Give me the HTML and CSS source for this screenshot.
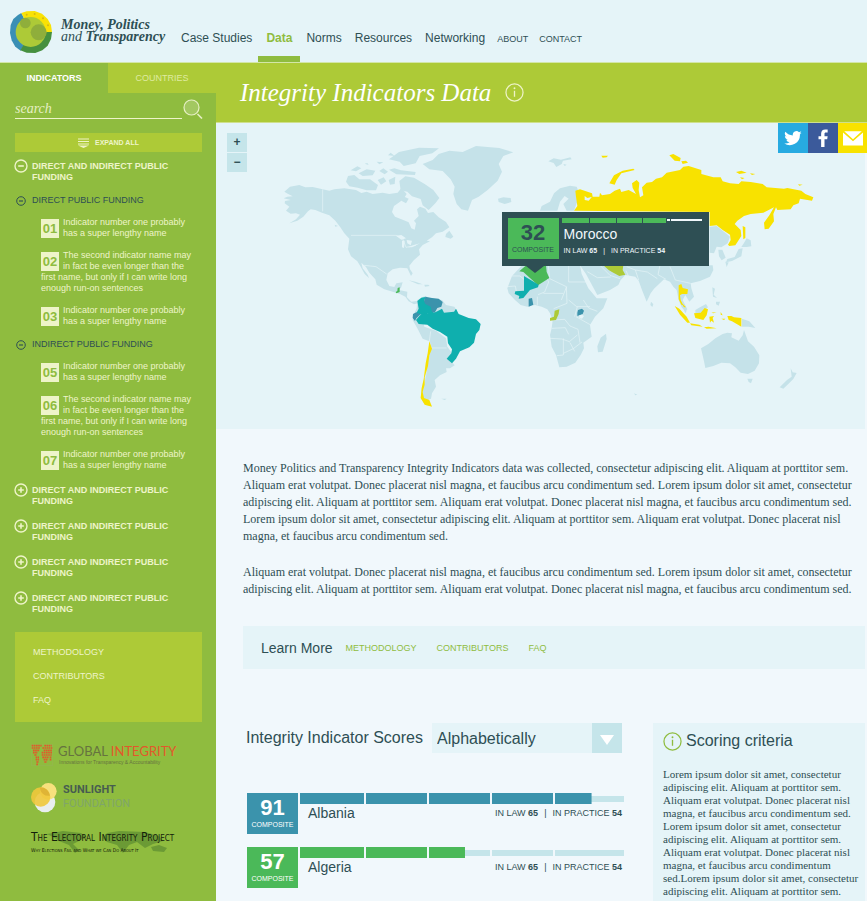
FILE: index.html
```html
<!DOCTYPE html>
<html lang="en">
<head>
<meta charset="utf-8">
<title>Money, Politics and Transparency</title>
<link rel="stylesheet" href="styles.css">
</head>
<body>
<svg width="0" height="0" class="defs" aria-hidden="true">
  <symbol id="minus" viewBox="0 0 14 14"><circle cx="7" cy="7" r="6" fill="none" stroke="currentColor" stroke-width="1.4"/><path d="M4.2 7h5.6" stroke="currentColor" stroke-width="1.6"/></symbol>
  <symbol id="plus" viewBox="0 0 14 14"><circle cx="7" cy="7" r="6" fill="none" stroke="currentColor" stroke-width="1.4"/><path d="M4.2 7h5.6M7 4.2v5.6" stroke="currentColor" stroke-width="1.6"/></symbol>
  <symbol id="info" viewBox="0 0 20 20"><circle cx="10" cy="10" r="9" fill="none" stroke="currentColor" stroke-width="1.3"/><path d="M10 8.2v6.3" stroke="currentColor" stroke-width="1.4"/><circle cx="10" cy="5.6" r="1" fill="currentColor"/></symbol>
</svg>
<header class="site-header">
  <a class="brand" href="#">
    <svg class="brand-mark" viewBox="0 0 126 126" aria-hidden="true">
      <path d="M63 63 34 6 24 12 10 24 2 42 0 66 5 88 16 107 32 119z" fill="#3a8fb5"/>
      <path d="M63 63 34 6 50 1 74 0 96 8 113 24 123 42 126 64z" fill="#f9e206"/>
      <path d="M63 63 126 63 123 84 113 104 97 118 76 126 50 125 31 118z" fill="#46903f"/>
      <circle cx="62" cy="63" r="45" fill="#adca37"/>
      <circle cx="46" cy="36" r="16" fill="#8fae3b"/><circle cx="86" cy="64" r="24" fill="#8fae3b"/>
      <g fill="#d9b912"><circle cx="50" cy="11" r="3"/><circle cx="74" cy="9" r="3"/><circle cx="99" cy="22" r="3"/><circle cx="114" cy="43" r="3"/></g>
    </svg>
    <span class="brand-name"><b>Money, Politics</b><span>and <b>Transparency</b></span></span>
  </a>
  <nav class="main-nav" aria-label="Main">
    <a href="#">Case Studies</a><a href="#" class="current">Data</a><a href="#">Norms</a><a href="#">Resources</a><a href="#">Networking</a><a href="#" class="minor">ABOUT</a><a href="#" class="minor">CONTACT</a>
  </nav>
</header>
<div class="shell">
<aside class="sidebar">
  <div class="tabs"><button type="button" class="tab active">INDICATORS</button><button type="button" class="tab">COUNTRIES</button></div>
  <form class="search">
    <input type="search" placeholder="search" aria-label="Search indicators">
    <button type="button" aria-label="Search"><svg viewBox="0 0 20 20"><circle cx="8.500" cy="8.500" r="7.500" fill="#a3c861" stroke="#e6efc4" stroke-width="1.2"/><path d="M14.500 15l4.500 4.500" stroke="#e6efc4" stroke-width="1.600"/></svg></button>
  </form>
  <button type="button" class="expand"><svg viewBox="0 0 11 10" aria-hidden="true"><path d="M0 1h11M0 3.500h11M0 6h11" stroke="#eef3c8"/><path d="M0 7.500h11L5.500 10z" fill="#eef3c8"/></svg>EXPAND ALL</button>
  <div class="tree">
    <button type="button" class="cat"><svg><use href="#minus"/></svg><span>DIRECT AND INDIRECT PUBLIC FUNDING</span></button>
    <button type="button" class="sub"><svg><use href="#minus"/></svg><span>DIRECT PUBLIC FUNDING</span></button>
    <ul class="indicators">
      <li><b>01</b>Indicator number one probably has a super lengthy name</li>
      <li><b>02</b>The second indicator name may in fact be even longer than the first name, but only if I can write long enough run-on sentences</li>
      <li><b>03</b>Indicator number one probably has a super lengthy name</li>
    </ul>
    <button type="button" class="sub"><svg><use href="#minus"/></svg><span>INDIRECT PUBLIC FUNDING</span></button>
    <ul class="indicators">
      <li><b>05</b>Indicator number one probably has a super lengthy name</li>
      <li><b>06</b>The second indicator name may in fact be even longer than the first name, but only if I can write long enough run-on sentences</li>
      <li><b>07</b>Indicator number one probably has a super lengthy name</li>
    </ul>
    <button type="button" class="cat"><svg><use href="#plus"/></svg><span>DIRECT AND INDIRECT PUBLIC FUNDING</span></button>
    <button type="button" class="cat"><svg><use href="#plus"/></svg><span>DIRECT AND INDIRECT PUBLIC FUNDING</span></button>
    <button type="button" class="cat"><svg><use href="#plus"/></svg><span>DIRECT AND INDIRECT PUBLIC FUNDING</span></button>
    <button type="button" class="cat"><svg><use href="#plus"/></svg><span>DIRECT AND INDIRECT PUBLIC FUNDING</span></button>
  </div>
  <nav class="side-links" aria-label="More"><a href="#">METHODOLOGY</a><a href="#">CONTRIBUTORS</a><a href="#">FAQ</a></nav>
  <div class="partners">
    <a class="gi" href="#">
      <svg viewBox="0 0 66 66" aria-hidden="true"><path d="M1 1h64v64H1z" fill="none" stroke="#9fae6a"/><g stroke="#e2582b" stroke-width="5" stroke-dasharray="5 1.500" fill="none"><path d="M2 5h30M40 5h22M2 12h26M34 12h30M6 19h20M38 19h26M6 26h14M32 26h32M10 33h8M32 33h30M14 40h10M34 40h20M56 40h6M14 47h10M38 47h12M56 47h6M16 54h8M40 54h8M16 61h5"/></g></svg>
      <span class="gi-text"><span class="gi-name">GLOBAL <em>INTEGRITY</em></span><small>Innovations for Transparency &amp; Accountability</small></span>
    </a>
    <a class="sun" href="#">
      <svg viewBox="0 0 78 90" aria-hidden="true"><circle cx="42" cy="57" r="31" fill="#e9eef0"/><circle cx="52" cy="25" r="25" fill="#f7e17d"/><circle cx="29" cy="42" r="29" fill="#f0c83c" opacity=".9"/><path d="M27 13a29 29 0 0 1 30 25A25 25 0 0 1 27 13z" fill="#dfb436"/></svg>
      <span class="sun-text"><b>SUNLIGHT</b><span>FOUNDATION</span></span>
    </a>
    <a class="eip" href="#">
      <svg viewBox="0 0 126 24" aria-hidden="true" fill="#6b9a35"><path d="M2 4 18 1 36 3 42 7 34 11 28 14 34 20 30 23 24 15 14 11 8 7zM62 3l12-2 26 1 14 4 4 5-10 3-8 4-8-6-8 3-6 8-6-8-10-3-4-4zM106 17l8-2 8 3-3 4-11-1z"/></svg>
      <span class="eip-name">The Electoral Integrity Project</span>
      <small>Why Elections Fail and What we Can Do About It</small>
    </a>
  </div>
</aside>
<main>
  <div class="banner"><h1>Integrity Indicators Data</h1><svg aria-hidden="true"><use href="#info"/></svg></div>
  <section class="map" aria-label="World map">
    <svg class="world" viewBox="0 0 1947 918" aria-hidden="true">
      <g transform="translate(0 -9)">
        <g class="land">
          <path d="M205 215 222 200 250 195 268 202 290 201 320 208 340 212 355 208 385 205 420 210 436 219 452 215 470 222 500 218 520 222 545 218 556 204 572 222 562 238 548 248 534 258 528 276 537 290 560 299 578 307 586 325 596 329 600 310 594 302 608 288 603 268 612 260 628 266 636 279 652 276 668 292 690 306 700 322 680 335 660 340 648 352 632 362 642 364 620 375 609 388 612 404 594 420 580 437 582 448 590 460 585 468 574 445 552 443 530 448 515 460 511 480 520 498 535 501 541 490 560 487 555 503 546 510 560 512 574 515 573 532 586 545 602 543 606 550 594 553 578 544 568 530 552 522 530 515 505 508 482 494 478 478 460 458 450 441 436 428 440 445 455 464 459 474 446 462 434 440 424 424 405 409 396 388 400 356 385 340 373 322 358 302 340 286 318 278 298 270 284 268 276 274 262 290 244 302 220 310 240 298 252 284 240 280 224 281 210 272 220 260 206 250 207 243 224 240 203 235 214 230 230 229 215 221z"/>
          <path d="M390 185 396 168 415 165 430 178 462 178 486 195 480 211 452 211 425 203 400 199zM404 151l20-12 12 6-16 9zM428 160l24-12 26 4-8 14-30 2zM482 125l20 2-12 6zM490 153l12-8 14 10-10 8zM485 180l18-8 8 12-16 10zM518 180l20-10-2 22-14 2zM519 118l30-22 60-13 60 2-20 15-38 8-12 22-36 8-12-13zM519 149l16-4 20 6 44 5-2 9-56-2zM550 183l18-14 26 4 32 19 26 18 18 24-12 16-20 20-18-14-6-19-26-8-14-14-20-4zM560 228l18 8-8 14-14-8zM536 108l-20-2 8-8zM690 342l10-10 12 18-8 6-16-5zM446 131l8-2 4 6zM366 318l-10-4 2 6z"/>
          <path d="M620 132 650 120 668 102 700 92 740 96 780 78 850 84 892 97 862 108 848 132 858 155 845 182 815 210 788 230 768 240 756 272 736 268 722 252 712 222 716 200 704 178 680 153 640 148z"/>
          <path d="M846 236l16-4 22 2 2 12-20 6-18-6zM578 481l20 4 22 8-14 0zM625 494l12 0 4 4-14 2zM676 836l16 0-6 4z"/>
          <path d="M604 540 618 532 628 528 640 535 678 540 690 555 715 560 721 570 708 580 640 600 620 600 625 620 660 632 690 655 694 680 710 702 700 718 716 736 702 745 690 745 692 756 672 766 656 780 660 800 648 820 645 836 630 842 648 858 628 855 614 835 618 800 628 760 636 720 640 664 620 656 604 625 590 600 594 582 602 565z"/>
        </g>
        <path d="M320 208V274M405 346H540L560 356 570 382 600 376M445 436 480 440 512 462M644 634 640 664 646 684 692 684M636 700 630 760 620 810" class="border"/>
        <path d="M540 347l16-2 14 10-14 4zM558 362l8 0-2 22-6-2zM572 360l16 2-4 14-10-6zM576 382l20-8 16-4-24 12z" fill="#e5f4f8"/>
        <path class="green" d="M545 504l6-2 0 14-10 4-2-4 5-3z"/>
        <path class="teal" d="M604 543l12-10 12-2-3 12 20 8 6 24 4 6-20-2-2 13-18-8-14-4 7-14z"/>
        <path class="blue" d="M628 530l20 4 20 2 12 10-4 14-12 4-8 14-8-2-4-16-16-8-4-8zM591 582l10-5 12 6-12 12-4 8-7-9z"/>
        <path class="teal" d="M640 578l14 0 10-4 14-8 6 12 30-3 6-9 8 16 30 12 22 4 14 14-4 18-10 12-6 26-14 14-28 12-12 22-12 14-16-14 14-16 2-12-12-18-2-20-22-14-22-10-16-12-26-2-8-12 12-14z"/>
        <path class="yellow" d="M640 664l8 22-8 20-4 32-10 34 0 22-6 22 4 18 16 6 8 20-22-6-12-20 3-30 6-26 6-48 6-30z"/>
        <g transform="translate(852 0)">
          <g class="land">
            <path d="M145 124l16-9 22 4 28-7 4 6-26 4-4 10-16 9-8-12zM190 132l10 2-6 4zM120 272 125 258 150 245 162 220 180 205 210 197 230 200 240 225 230 250 222 272 200 272 190 252 206 236 194 228 180 245 172 272z"/>
            <path d="M66 436 36 468 22 505 26 520 45 540 62 555 82 560 105 555 125 560 142 568 150 580 158 600 155 625 150 645 155 680 168 705 178 742 200 740 226 728 242 705 252 685 250 668 275 650 270 615 285 590 310 565 322 535 290 535 265 505 245 462 240 436z"/>
            <path d="M240 436 258 462 292 525 330 510 355 495 362 480 376 465 406 470 416 482 426 510 440 545 452 520 462 506 492 478 510 485 520 500 530 510 536 540 545 562 556 574 562 568 548 540 556 525 568 545 582 530 574 505 572 490 600 483 630 470 640 450 638 436z"/>
            <path d="M629 320 650 318 668 332 690 350 683 370 664 382 650 380 642 400 629 398zM655 389l12 0 10 24-12 8-8-12zM740 355l12 6 2 18-14 2-16 0 8-12zM728 385l-4 24-28 14-18 4 4-10 22-6 12-24zM676 425l10 2-6 14zM453 545l7 8-3 8-6-6zM637 502l8 4-4 18 10 10-12-4zM648 545l12 0-4 12-8-4zM586 570l14-8 18-10 6 10-20 16-18 4zM726 596l22 8 18 20-20-4-20 0zM548 560l12 12-4 8z"/>
            <path d="M603 685 625 672 646 655 668 642 682 638 696 640 694 652 716 662 728 646 732 630 744 664 762 680 778 706 777 730 764 752 744 762 722 758 706 742 690 730 664 728 640 738 616 744 612 724zM742 776l16 0-5 14-7-4zM872 745l6 12 12 2-10 18-12 12-18 17-11-4 22-22 14-10zM318 641l2 16-12 38-14 2-2-18 10-26zM402 820l10 4-6 2z"/>
          </g>
          <path class="border" d="M36 468h24l12 10M22 500l24-2 4 22M138 470l8 16-12 30-20 8M145 436l4 40 50 24 2 50-40 16M206 436v50h56M200 500l-16 40M206 540l24 20 40 0M130 520h60M112 530v26M158 600l36-2 16 20 24 10 6 40M150 655l36 2 22 8 24-20M156 625l40-2 10 20M190 655v50l-20 2M190 700l30-14 26-20M210 668l14 26M228 590l46 26M250 540l16 24 26 10M232 560l-8 30M300 436l30 30 30 10M262 455l30 18 40-2M380 440l26 10 10 30M406 450l36 6 30 20M480 436l-6 28 24 14M510 440l16 40 46 10M378 452l8 18"/>
          <path class="yellow" d="M222 272 232 258 228 230 226 212 240 208 276 220 278 230 262 234 254 228 254 240 266 242 276 230 298 230 300 218 306 226 330 222 344 212 360 206 364 216 386 210 408 222 398 204 396 190 410 180 418 188 416 210 420 232 430 226 426 202 440 188 456 186 468 176 486 172 500 158 540 150 550 140 566 138 604 150 604 162 640 172 662 172 668 184 690 190 716 192 724 184 752 186 788 192 800 202 852 206 862 204 904 212 916 222 940 232 936 242 900 236 896 250 880 256 872 268 832 270 828 262 820 282 822 304 806 326 794 328 792 308 808 286 822 262 790 278 752 282 732 288 712 302 704 312 722 330 724 348 706 376 688 378 684 374 692 360 690 344 668 330 650 316 629 318 629 276z"/>
          <path class="yellow" d="M328 190l14-24 26-14 32-6 4 4-40 10-14 20-6 14zM304 107l20 0-4 5-12 1zM508 106l12-4 22 12-2 10-16-2zM544 124l14-2 6 6-16 4zM708 156l16-4 16 6-22 4zM750 160l16 2-10 3zM720 172l14 2-8 4zM894 193l14 1-10 3zM728 318l8 4 0 32-6 4z"/>
          <path class="yellow" d="M536 496l8-4 4 12 16 4-2 14-16 0-6 4 2 14 8 16-6-2-8-16zM538 542l8 8 12 12-6 0zM524 558l14 8 22 24 10 18-8 0-22-24zM570 610l28 4 10 6-34-4zM582 580l20-2 12-14 10 4-4 18-10 14-24-6zM628 590l14-2-4 6 4 14-8-6-4 6zM634 578l16-2-10 4zM612 622l14-2 24 5-30 1zM662 576l6 10-6-2zM682 588l12 0 8 4 22 2 0 26-10-6-18-10-10-4zM664 596l12 0-4 4z"/>
          <path class="lime" d="M310 436h60l-2 14 8 14-18 4-22-12-10-6zM164 572l14-4-2 14-8 18-18 2 0-8 12-4z"/>
          <path class="green" d="M76 438l62-2 2 20 8 18-34 22-44-40-12-2z"/>
          <path class="teal" d="M72 468l44 26-2 8-24 8-20 24-14 2 2-8-14-6 2-8 26-2z"/>
          <path class="blue" d="M86 536l10-2 4 20-14 6zM234 570l12-4 6 6-4 10-16 6 0-10z"/>
          <path d="M238 586l8-2 6 4-6 8-8-2z" fill="#e5f4f8"/>
        </g>
      </g>
    </svg>
    <div class="zoom"><button type="button" aria-label="Zoom in">+</button><button type="button" aria-label="Zoom out">−</button></div>
    <div class="social">
      <a class="tw" href="#" aria-label="Twitter"><svg viewBox="0 0 24 24"><path fill="#fff" d="M23.600 4.900a9.500 9.500 0 0 1-2.700.8 4.800 4.800 0 0 0 2.100-2.700 9.700 9.700 0 0 1-3 1.200 4.800 4.800 0 0 0-8.200 4.300A13.600 13.600 0 0 1 1.900 3.600a4.800 4.800 0 0 0 1.500 6.400 4.800 4.800 0 0 1-2.200-.6 4.800 4.800 0 0 0 3.800 4.700 4.800 4.800 0 0 1-2.100.1 4.800 4.800 0 0 0 4.500 3.300A9.600 9.600 0 0 1 .4 19.400a13.500 13.500 0 0 0 20.800-12z"/></svg></a>
      <a class="fb" href="#" aria-label="Facebook"><svg viewBox="0 0 24 24"><path fill="#fff" d="M9.500 24V13.500H6V9.500h3.500V6.400C9.500 2.800 11.500.8 15 .8h3.200v4h-2.300c-1.500 0-1.900.7-1.900 2v2.700h4.200l-.6 4H14V24z"/></svg></a>
      <a class="ml" href="#" aria-label="Email"><svg viewBox="0 0 24 24"><path fill="#fff" d="M1.500 4h21L12 13.500zM0 5.500l12 10.500L24 5.500V21H0z"/></svg></a>
    </div>
    <div class="tooltip">
      <div class="badge"><strong>32</strong><span>COMPOSITE</span></div>
      <div class="tip-body">
        <div class="tip-bar"><i></i><i></i><i></i><i></i><i class="rest"></i><i class="rest"></i></div>
        <span class="tip-name">Morocco</span>
        <span class="tip-meta">IN LAW <b>65</b><i>|</i>IN PRACTICE <b>54</b></span>
      </div>
    </div>
  </section>
  <div class="content">
    <div class="intro">
      <p>Money Politics and Transparency Integrity Indicators data was collected, consectetur adipiscing elit. Aliquam at porttitor sem.<br>Aliquam erat volutpat. Donec placerat nisl magna, et faucibus arcu condimentum sed. Lorem ipsum dolor sit amet, consectetur<br>adipiscing elit. Aliquam at porttitor sem. Aliquam erat volutpat. Donec placerat nisl magna, et faucibus arcu condimentum sed.<br>Lorem ipsum dolor sit amet, consectetur adipiscing elit. Aliquam at porttitor sem. Aliquam erat volutpat. Donec placerat nisl<br>magna, et faucibus arcu condimentum sed.</p>
      <p>Aliquam erat volutpat. Donec placerat nisl magna, et faucibus arcu condimentum sed. Lorem ipsum dolor sit amet, consectetur<br>adipiscing elit. Aliquam at porttitor sem. Aliquam erat volutpat. Donec placerat nisl magna, et faucibus arcu condimentum sed.</p>
    </div>
    <nav class="learn" aria-label="Learn more"><span>Learn More</span><a href="#">METHODOLOGY</a><a href="#">CONTRIBUTORS</a><a href="#">FAQ</a></nav>
    <div class="columns">
      <section class="scores">
        <div class="scores-head">
          <label for="sort">Integrity Indicator Scores</label>
          <div class="select"><select id="sort"><option>Alphabetically</option></select><svg viewBox="0 0 30 30" aria-hidden="true"><path fill="#c5e5ea" d="M0 0h30v30H0z"/><path fill="#fff" d="M8 12h14l-7 10z"/></svg></div>
        </div>
        <article class="score blue-row">
          <div class="badge"><strong>91</strong><span>COMPOSITE</span></div>
          <div class="score-body">
            <div class="bar"><i style="--v:100%"></i><i style="--v:100%"></i><i style="--v:100%"></i><i style="--v:100%"></i><i style="--v:53%"></i></div>
            <div class="score-line"><h3>Albania</h3><span>IN LAW <b>65</b><i>|</i>IN PRACTICE <b>54</b></span></div>
          </div>
        </article>
        <article class="score green-row">
          <div class="badge"><strong>57</strong><span>COMPOSITE</span></div>
          <div class="score-body">
            <div class="bar"><i style="--v:100%"></i><i style="--v:100%"></i><i style="--v:59%"></i><i style="--v:0%"></i><i style="--v:0%"></i></div>
            <div class="score-line"><h3>Algeria</h3><span>IN LAW <b>65</b><i>|</i>IN PRACTICE <b>54</b></span></div>
          </div>
        </article>
      </section>
      <section class="criteria">
        <h2><svg aria-hidden="true"><use href="#info"/></svg>Scoring criteria</h2>
        <p>Lorem ipsum dolor sit amet, consectetur<br>adipiscing elit. Aliquam at porttitor sem.<br>Aliquam erat volutpat. Donec placerat nisl<br>magna, et faucibus arcu condimentum sed.<br>Lorem ipsum dolor sit amet, consectetur<br>adipiscing elit. Aliquam at porttitor sem.<br>Aliquam erat volutpat. Donec placerat nisl<br>magna, et faucibus arcu condimentum<br>sed.Lorem ipsum dolor sit amet, consectetur<br>adipiscing elit. Aliquam at porttitor sem.</p>
      </section>
    </div>
  </div>
</main>
</div>
</body>
</html>
```
FILE: styles.css
```css
* { box-sizing: border-box; }
html, body { margin: 0; }
body {
  --dark: #2e4f54;
  --green: #8fbc3f;
  --lime: #adca37;
  --pale: #e5f4f8;
  --cream: #eef4c9;
  display: flex;
  flex-direction: column;
  min-height: 100vh;
  background: #f1f8fc;
  color: var(--dark);
  font-family: "Liberation Sans", Arial, sans-serif;
}
a { color: inherit; text-decoration: none; }
button { font: inherit; color: inherit; background: none; border: 0; padding: 0; margin: 0; cursor: pointer; }
h1, h2, h3, p, ul { margin: 0; padding: 0; font-weight: normal; }
i { font-style: normal; }
.defs { position: absolute; }

.site-header { display: flex; height: 63px; background: var(--pale); border-bottom: 1px solid #d3e6a8; }
.brand { display: flex; padding: 11px 0 0 10px; gap: 9px; }
.brand-mark { width: 42px; height: 42px; }
.brand-name { display: flex; flex-direction: column; width: 106px; padding-top: 8px; font: italic 14px/12px "Liberation Serif", serif; white-space: nowrap; }
.main-nav { display: flex; margin-left: 7px; font-size: 12px; line-height: 16px; white-space: nowrap; }
.main-nav a { padding: 30px 7px 0; margin-right: -1px; }
.main-nav .current { color: var(--green); font-weight: bold; border-bottom: 6px solid var(--green); padding: 30px 8px 0; }
.main-nav .minor { font-size: 9px; padding: 31px 6px 0; }

.shell { flex: 1; display: grid; grid-template-columns: 216px minmax(0, 1fr); }
.sidebar { background: var(--green); color: var(--cream); font-size: 9px; line-height: 11px; }
.tabs { display: grid; grid-template-columns: 1fr 1fr; height: 30px; }
.tab { background: var(--lime); color: #dfeaa0; }
.tab.active { background: var(--green); color: #fff; font-weight: bold; }
.search { display: flex; gap: 1px; padding: 6px 13px 0 15px; height: 40px; align-items: flex-start; }
.search input { flex: 1; min-width: 0; height: 20px; padding: 0; border: 0; border-bottom: 1px solid var(--cream); background: none; outline: 0; font: italic 14px/18px "Liberation Serif", serif; color: #fff; }
.search input::placeholder { color: #e6efc4; opacity: 1; }
.search button { width: 20px; height: 20px; }
.search svg { display: block; width: 20px; height: 20px; }
.expand { display: flex; align-items: center; justify-content: center; gap: 6px; width: 187px; height: 19px; margin-left: 15px; background: var(--lime); color: var(--cream); font-size: 7px; font-weight: bold; }
.expand svg { width: 11px; height: 10px; }
.tree { padding: 7px 19px 0 14px; }
.cat, .sub { display: flex; text-align: left; }
.cat { gap: 4px; font-weight: bold; height: 36px; width: 170px; padding-top: 2px; }
.cat svg { flex: none; width: 14px; height: 14px; margin-top: -2px; }
.sub { gap: 6px; padding-left: 2px; color: var(--dark); align-items: center; height: 11px; }
.sub svg { width: 10px; height: 10px; }
.indicators { list-style: none; padding: 11px 0 12px 27px; }
.indicators li { min-height: 22px; margin-bottom: 11px; }
.indicators li:last-child { margin-bottom: 0; }
.indicators b { float: left; width: 18px; height: 19px; margin: 2px 4px 0 0; background: var(--cream); color: var(--green); font-size: 13px; line-height: 19px; text-align: center; }
.side-links { display: flex; flex-direction: column; gap: 13px; margin: 5px 14px 0 15px; padding: 15px 18px 16px; background: var(--lime); }
.partners { padding: 22px 0 20px 31px; }
.gi { display: flex; gap: 5px; }
.gi svg { width: 22px; height: 22px; }
.gi-text { display: flex; flex-direction: column; white-space: nowrap; }
.gi-name { font: 13px/15px Lato, sans-serif; color: #66733f; }
.gi em { color: #e2582b; font-style: normal; }
.gi small { font-size: 5px; line-height: 6px; color: #66733f; padding-left: 1px; }
.sun { display: flex; gap: 6px; margin-top: 17px; }
.sun svg { width: 26px; height: 30px; }
.sun-text { display: flex; flex-direction: column; font: 11px/14px Roboto, sans-serif; color: #7fa56a; }
.sun b { color: #475c50; }
.eip { display: block; position: relative; margin-top: 17px; color: #13200a; white-space: nowrap; }
.eip svg { position: absolute; left: 14px; top: 0; width: 126px; height: 24px; }
.eip-name, .eip small { position: relative; display: block; font: small-caps 12px/15px "DejaVu Sans Condensed", sans-serif; }
.eip small { font-size: 5px; line-height: 10px; }

.banner { display: flex; align-items: center; gap: 14px; height: 60px; padding-left: 24px; background: var(--lime); border-bottom: 1px solid #cfe08c; color: #fff; }
.banner h1 { font: italic 25px/30px "Liberation Serif", serif; }
.banner svg { width: 19px; height: 19px; color: #eef3c8; }
.map { position: relative; margin-right: 2px; background: var(--pale); }
.world { display: block; width: 100%; }
.land { fill: #c5e2e9; }
.border { fill: none; stroke: var(--pale); stroke-width: 2; }
.green { fill: #4bb959; } .teal { fill: #0fafae; } .blue { fill: #3b93ac; } .yellow { fill: #f8e200; } .lime { fill: #adca37; }
.zoom { position: absolute; left: 11px; top: 10px; display: flex; flex-direction: column; gap: 1px; }
.zoom button { width: 20px; height: 19px; background: #c5e5ea; font-size: 12px; font-weight: bold; line-height: 19px; }
.social { position: absolute; right: -2px; top: 0; display: flex; }
.social a { display: grid; place-items: center; width: 30px; height: 30px; }
.social svg { width: 18px; height: 18px; }
.tw { background: #27aae1; } .fb { background: #3b5a9b; }
.social .ml { width: 29px; background: #f8e200; }
.ml svg { width: 20px; height: 20px; }
.tooltip { position: absolute; left: 44%; top: 29%; display: flex; gap: 3px; width: 207px; height: 54px; padding: 6px; background: var(--dark); color: #f1f8fc; }
.tooltip::after { content: ""; position: absolute; left: 24px; top: 54px; border: solid transparent; border-width: 7px 9px 0; border-top-color: var(--dark); }
.badge { flex: none; width: 51px; height: 41px; padding-top: 4px; text-align: center; color: #fff; }
.badge strong { display: block; font-size: 22px; line-height: 22px; }
.badge span { display: block; font-size: 7px; line-height: 12px; }
.tooltip .badge { background: #4bb959; color: var(--dark); }
.tip-body { flex: 1; display: flex; flex-direction: column; padding-right: 1px; }
.tip-bar { display: grid; grid-template-columns: 27fr 25fr 25fr 22fr 3fr 30fr; gap: 1px; align-items: center; height: 5px; }
.tip-bar i { height: 5px; background: #4bb959; }
.tip-bar .rest { height: 2px; background: #f1f8fc; }
.tip-name { font-size: 14px; line-height: 23px; padding-left: 2px; }
.tip-meta { font-size: 7px; line-height: 10px; padding-left: 2px; }
.tip-meta, .score-line span { white-space: nowrap; }
.tip-meta i, .score-line i { padding: 0 6px; }

.content { padding: 31px 2px 0 27px; }
.intro { font: 12px/17px "Liberation Serif", serif; white-space: nowrap; }
.intro p { margin-bottom: 19px; }
.learn { display: flex; align-items: center; gap: 20px; height: 43px; margin-top: 28px; padding-left: 18px; background: var(--pale); color: var(--green); font-size: 9px; }
.learn span { color: var(--dark); font-size: 14px; margin-right: -7px; }
.columns { display: grid; grid-template-columns: minmax(0, 377px) minmax(0, 212px); justify-content: space-between; margin: 54px 0 0 4px; }
.scores-head { display: flex; justify-content: space-between; align-items: center; height: 30px; margin: 0 2px 40px -1px; font-size: 16px; white-space: nowrap; }
.select { display: flex; width: 190px; height: 30px; background: var(--pale); position: relative; }
.select select { flex: 1; appearance: none; border: 0; background: none; padding: 0 5px; font: inherit; color: inherit; }
.select svg { position: absolute; right: 0; width: 30px; height: 30px; pointer-events: none; }
.score { display: flex; gap: 2px; margin-bottom: 13px; }
.blue-row { --c: #3b93ac; } .green-row { --c: #4bb959; }
.score .badge { background: var(--c); }
.score-body { flex: 1; }
.bar { display: grid; grid-template-columns: 64fr 61fr 61fr 61fr 69fr; gap: 2px; height: 11px; }
.bar i { background: linear-gradient(var(--c), var(--c)) 0 0 / var(--v) 100% no-repeat, linear-gradient(#c5e5ea, #c5e5ea) 0 3px / 100% 6px no-repeat; }
.score-line { display: flex; justify-content: space-between; align-items: center; padding: 0 2px 0 8px; font-size: 9px; line-height: 18px; }
.score-line h3 { font-size: 14px; }
.criteria { background: var(--pale); padding: 8px 0 10px 10px; }
.criteria h2 { display: flex; align-items: center; gap: 4px; font-size: 16px; line-height: 20px; margin-bottom: 17px; }
.criteria svg { width: 19px; height: 19px; color: var(--green); }
.criteria p { font: 11px/13px "Liberation Serif", serif; white-space: nowrap; }
```
